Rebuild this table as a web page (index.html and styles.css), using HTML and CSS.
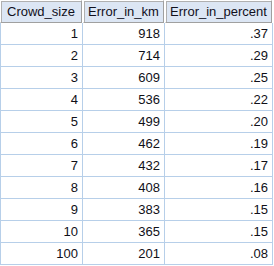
FILE: index.html
```html
<!DOCTYPE html>
<html>
<head>
<meta charset="utf-8">
<link rel="stylesheet" href="styles.css">
</head>
<body>
<div class="grid">
  <div class="hd">Crowd_size</div>
  <div class="hd">Error_in_km</div>
  <div class="hd">Error_in_percent</div>

  <div class="c first">1</div><div class="c">918</div><div class="c">.37</div>
  <div class="c first">2</div><div class="c">714</div><div class="c">.29</div>
  <div class="c first">3</div><div class="c">609</div><div class="c">.25</div>
  <div class="c first">4</div><div class="c">536</div><div class="c">.22</div>
  <div class="c first">5</div><div class="c">499</div><div class="c">.20</div>
  <div class="c first">6</div><div class="c">462</div><div class="c">.19</div>
  <div class="c first">7</div><div class="c">432</div><div class="c">.17</div>
  <div class="c first">8</div><div class="c">408</div><div class="c">.16</div>
  <div class="c first">9</div><div class="c">383</div><div class="c">.15</div>
  <div class="c first">10</div><div class="c">365</div><div class="c">.15</div>
  <div class="c first">100</div><div class="c">201</div><div class="c">.08</div>
</div>
</body>
</html>
```
FILE: styles.css
```css
html, body {
  margin: 0;
  padding: 0;
  background: #ffffff;
}
body {
  font-family: "Liberation Sans", Arial, sans-serif;
  font-size: 13px;
  color: #101018;
}
.grid {
  display: grid;
  grid-template-columns: 83px 82px 108px;
  grid-auto-rows: 22px;
  grid-template-rows: 23px;
  width: 273px;
}
.hd {
  box-sizing: border-box;
  background: #dce6f4;
  border: 1px solid #a0a0a0;
  border-top-color: #ffffff;
  border-left-color: #ffffff;
  box-shadow: inset 1px 1px 0 #b0b0b0;
  margin-right: 1px;
  display: flex;
  align-items: center;
  justify-content: center;
  color: #10101c;
}
.c {
  box-sizing: border-box;
  border-right: 1px solid #b7cfe9;
  border-bottom: 1px solid #b7cfe9;
  display: flex;
  align-items: center;
  justify-content: flex-end;
  padding-right: 4px;
}
.c.first {
  border-left: 1px solid #b7cfe9;
}
```
